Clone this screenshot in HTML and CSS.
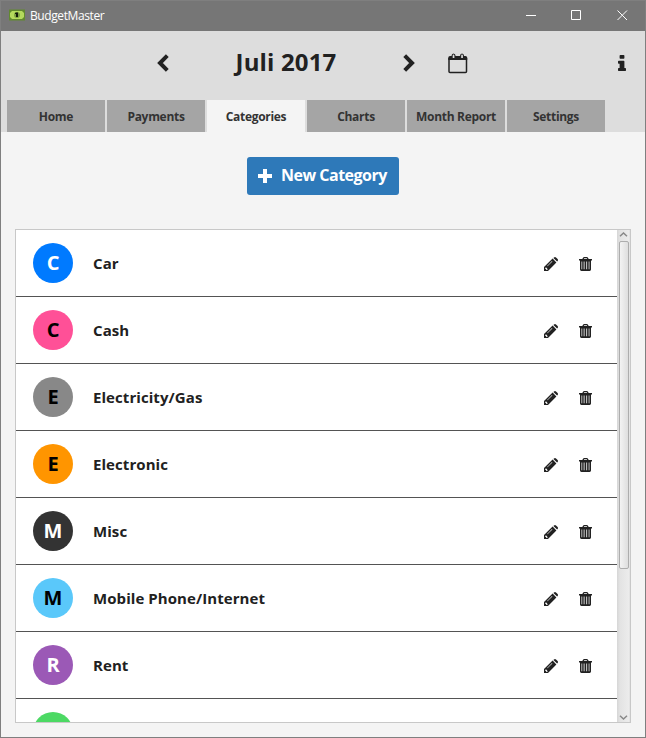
FILE: index.html
```html
<!DOCTYPE html>
<html lang="en">
<head>
<meta charset="utf-8">
<title>BudgetMaster</title>
<link rel="stylesheet" href="styles.css">
</head>
<body>
<svg class="defs" width="0" height="0">
  <symbol id="pencil" viewBox="0 0 14 14"><path fill-rule="evenodd" d="M0 14V10L8.600 1.600 12.400 5.400 4 14ZM9.400 .9L10 .4Q11 -.4 12 .4L13.600 2Q14.400 3 13.600 4L13.100 4.600ZM1.300 10.900V12H2.200V12.900H3.100L3.700 12.200 2 10.300ZM3.500 9.300L8.400 4.500 8 4.100 3.100 8.900Z"/></symbol>
  <symbol id="trash" viewBox="0 0 13 14"><path fill-rule="evenodd" d="M0 3.400V2H3.300L4.200 .6Q4.500 0 5.200 0H7.800Q8.500 0 8.800 .6L9.700 2H13V3.400H12V12.600Q12 14 10.600 14H2.400Q1 14 1 12.600V3.400H0ZM4.800 2H8.200L7.800 1.200H5.200ZM2.500 4.500V12.300H3.200V4.500ZM4.700 4.500V12.300H5.500V4.500ZM7.300 4.500V12.300H8.100V4.500ZM9.700 4.500V12.300H10.400V4.500Z"/></symbol>
</svg>
<div class="window">
  <header class="titlebar">
    <svg class="logo" width="16" height="12" viewBox="0 0 16 12"><rect width="16" height="11" y=".5" fill="#61892f"/><path d="M3 2h10l2 2v4l-2 2H3L1 8V4z" fill="#b4da5c"/><circle cx="8" cy="6" r="3" fill="#7da142"/><path d="M7 3.500h2v4.500H7V5H6V4z" fill="#151d0b"/></svg>
    <span class="app-name">BudgetMaster</span>
    <svg class="controls" width="106" height="12" viewBox="0 0 106 12" fill="none" stroke="#fff"><path d="M0 6.500h10M45.500 1.500h9v9h-9z"/><path d="M91.500 1.500l9.500 9.500M101 1.500l-9.500 9.500"/></svg>
  </header>
  <section class="top">
    <div class="month-nav">
      <svg class="prev" width="12" height="18" viewBox="0 0 12 18"><path d="M10.300 1.700L3 9l7.300 7.300"/></svg>
      <h1><span>Juli 2017</span></h1>
      <svg class="next" width="12" height="18" viewBox="0 0 12 18"><path d="M1.700 1.700L9 9l-7.300 7.300"/></svg>
      <svg class="calendar" width="20" height="21" viewBox="0 0 20 21"><path fill="none" stroke="#212121" stroke-width="1.500" d="M1 5v13.500q0 1 1 1h15.500q1 0 1-1V5"/><path fill="#212121" fill-rule="evenodd" d="M.3 7V4.500Q.3 3 2 3H3.500Q3.500 .5 5.500 .5T7.600 3H12Q12 .5 14 .5T16.100 3H17.500Q19.200 3 19.200 4.500V7ZM4.700 5H6.400V2.500Q6.300 1.500 5.500 1.500T4.700 2.500ZM13.200 5H14.900V2.500Q14.800 1.500 14 1.500T13.200 2.500Z"/></svg>
      <svg class="info" width="8" height="16" viewBox="576 128 640 1408" preserveAspectRatio="none"><path fill="#212121" d="M1216 1344v128q0 26-19 45t-45 19h-512q-26 0-45-19t-19-45v-128q0-26 19-45t45-19h64v-384h-64q-26 0-45-19t-19-45v-128q0-26 19-45t45-19h384q26 0 45 19t19 45v576h64q26 0 45 19t19 45zm-128-1152v192q0 26-19 45t-45 19h-256q-26 0-45-19t-19-45v-192q0-26 19-45t45-19h256q26 0 45 19t19 45z"/></svg>
    </div>
    <nav class="tabs">
      <a>Home</a><a>Payments</a><a class="active">Categories</a><a>Charts</a><a>Month Report</a><a>Settings</a>
    </nav>
  </section>
  <main>
    <button class="new"><svg width="14" height="14" viewBox="0 0 14 14"><path fill="#fff" d="M5 0h4v5h5v4H9v5H5V9H0V5h5z"/></svg><span>New Category</span></button>
    <div class="list">
      <div class="rows">
        <div class="row"><i class="dot blue">C</i><b>Car</b><svg class="edit"><use href="#pencil"/></svg><svg class="del"><use href="#trash"/></svg></div>
        <div class="row"><i class="dot pink">C</i><b>Cash</b><svg class="edit"><use href="#pencil"/></svg><svg class="del"><use href="#trash"/></svg></div>
        <div class="row"><i class="dot gray">E</i><b>Electricity/Gas</b><svg class="edit"><use href="#pencil"/></svg><svg class="del"><use href="#trash"/></svg></div>
        <div class="row"><i class="dot orange">E</i><b>Electronic</b><svg class="edit"><use href="#pencil"/></svg><svg class="del"><use href="#trash"/></svg></div>
        <div class="row"><i class="dot dark">M</i><b>Misc</b><svg class="edit"><use href="#pencil"/></svg><svg class="del"><use href="#trash"/></svg></div>
        <div class="row"><i class="dot sky">M</i><b>Mobile Phone/Internet</b><svg class="edit"><use href="#pencil"/></svg><svg class="del"><use href="#trash"/></svg></div>
        <div class="row"><i class="dot purple">R</i><b>Rent</b><svg class="edit"><use href="#pencil"/></svg><svg class="del"><use href="#trash"/></svg></div>
        <div class="row"><i class="dot green"></i></div>
      </div>
      <div class="scrollbar">
        <svg width="9" height="5" viewBox="0 0 9 5"><path d="M1 4.200L4.500 1 8 4.200"/></svg>
        <div class="thumb"></div>
        <svg class="down" width="9" height="5" viewBox="0 0 9 5"><path d="M1 .8L4.500 4 8 .8"/></svg>
      </div>
    </div>
  </main>
</div>
</body>
</html>
```
FILE: styles.css
```css
* { box-sizing: border-box; }
body { margin: 0; font-family: "Open Sans", "Noto Sans", sans-serif; color: #212121; }
svg { display: block; flex: none; }
.defs { position: absolute; }
.window { width: 646px; height: 738px; border: 1px solid #7f7f7f; background: #f4f4f4; display: flex; flex-direction: column; overflow: hidden; }
.titlebar { height: 30px; flex: none; background: #767676; display: flex; align-items: center; padding: 0 13px 2px 8px; }
.app-name { color: #fff; font-size: 12px; margin-left: 5px; flex: 1; letter-spacing: -.4px; }
.top { height: 101px; flex: none; background: #ddd; display: flex; flex-direction: column; }
.month-nav { height: 69px; display: flex; align-items: center; padding: 0 19px 5px 156px; }
.prev, .next { fill: none; stroke: #212121; stroke-width: 4; }
h1 { margin: 0 0 2px; width: 234px; text-align: center; font-size: 24px; line-height: 30px; font-weight: 700; letter-spacing: .15px; }
.calendar { margin: 1px 0 0 33px; }
.info { margin-left: auto; }
.tabs { display: flex; gap: 2px; padding-left: 6px; }
.tabs a { width: 98px; height: 32px; background: #a5a5a5; color: #333; text-align: center; font-size: 12px; line-height: 33px; font-weight: 700; letter-spacing: -.3px; white-space: nowrap; }
.tabs .active { background: #f4f4f4; }
main { flex: 1; display: flex; flex-direction: column; align-items: center; padding: 25px 14px 14px; min-height: 0; }
.new { width: 152px; height: 38px; flex: none; border: 0; border-radius: 3px; padding: 0 0 0 11px; background: #2e79b9; color: #fff; display: flex; align-items: center; gap: 9px; font: 700 16px "Open Sans", sans-serif; letter-spacing: -.5px; white-space: nowrap; }
.new span { padding-bottom: 2px; }
.list { margin-top: 34px; width: 616px; height: 494px; border: 1px solid #c8c8c8; background: #fff; display: flex; overflow: hidden; }
.rows { flex: 1; overflow: hidden; }
.row { height: 67px; border-bottom: 1px solid #545454; display: flex; align-items: center; padding: 0 25px 0 17px; fill: #212121; }
.dot { width: 40px; height: 40px; border-radius: 50%; margin-right: 20px; display: block; text-align: center; font: 700 20px/40px "Open Sans", sans-serif; color: #000; }
.row b { flex: 1; font-size: 15px; line-height: 22px; padding-bottom: 1px; letter-spacing: .07px; }
.edit { width: 14px; height: 14px; margin: 2px 21px 0 0; }
.del { width: 13px; height: 14px; margin-top: 2px; }
.blue { background: #007aff; color: #fff; }
.pink { background: #ff5097; }
.gray { background: #888; }
.orange { background: #ff9500; }
.dark { background: #333; color: #fff; }
.sky { background: #5ac8fa; }
.purple { background: #9b59b6; color: #fff; }
.green { background: #4cd964; }
.scrollbar { width: 13px; background: linear-gradient(90deg, #d6d6d6 0, #e3e3e3 3px, #ececec 12px, #dcdcdc 13px); display: flex; flex-direction: column; align-items: center; padding: 2px 0; }
.scrollbar svg { fill: none; stroke: #888; stroke-width: 1.5; }
.thumb { width: 10px; height: 328px; margin-top: 4px; border: 1px solid #adadad; border-radius: 2px; background: linear-gradient(90deg, #f3f3f3, #dedede); }
.scrollbar .down { margin-top: auto; }
```
